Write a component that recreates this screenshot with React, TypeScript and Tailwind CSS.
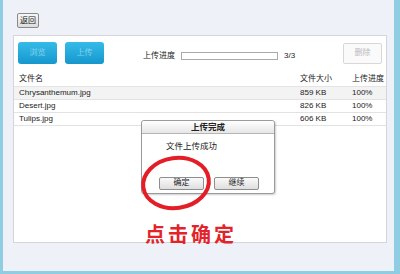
import React from 'react';

const files = [
  { name: 'Chrysanthemum.jpg', size: '859 KB', progress: '100%' },
  { name: 'Desert.jpg', size: '826 KB', progress: '100%' },
  { name: 'Tulips.jpg', size: '606 KB', progress: '100%' },
];

const font = { fontFamily: '"Liberation Sans", "Noto Sans CJK SC", sans-serif' };

export default function App() {
  return (
    <div className="w-[400px] h-[274px] bg-[#8ecde2] overflow-hidden text-[#222]" style={font}>
      <div className="relative ml-[3px] w-[391px] h-[271px] bg-[#eef2f8]">
        {/* back button */}
        <div className="pt-[13px] pl-[14px]">
          <button className="w-[22px] h-[15px] text-[8px] leading-none border border-[#8a8a8a] rounded-[2px] bg-gradient-to-b from-[#f7f7f7] to-[#dcdcdc] flex items-center justify-center">
            返回
          </button>
        </div>

        {/* main panel */}
        <div className="mt-[7px] ml-[10px] w-[374px] h-[208px] bg-white border border-[#d4d6da]">
          {/* toolbar */}
          <div className="flex items-center h-[26px] mt-[4px] pl-[4px] pr-[4px] text-[8px] leading-none">
            <button className="w-[39px] h-[22px] rounded-[3px] bg-gradient-to-b from-[#34bbe8] to-[#1597cd] text-[#84d2ef]">
              浏览
            </button>
            <button className="ml-[8px] w-[39px] h-[22px] rounded-[3px] bg-gradient-to-b from-[#34bbe8] to-[#1597cd] text-[#84d2ef]">
              上传
            </button>
            <span className="ml-[39px] mt-[6px] whitespace-nowrap">上传进度</span>
            <div className="ml-[6px] mt-[6px] w-[97px] h-[8px] border border-[#aaa] bg-white"></div>
            <span className="ml-[6px] mt-[6px]">3/3</span>
            <button className="ml-auto w-[39px] h-[21px] border border-[#d8d8d8] rounded-[2px] bg-[#fafafa] text-[#bbb]">
              删除
            </button>
          </div>

          {/* table */}
          <div className="mt-[6px] text-[8px] leading-none">
            <div className="flex h-[15px] items-center border-b border-[#e4e4e4] whitespace-nowrap">
              <span className="pl-[5px] flex-1">文件名</span>
              <span className="w-[52px]">文件大小</span>
              <span className="w-[34px]">上传进度</span>
            </div>
            {files.map((f, i) => (
              <div
                key={f.name}
                className={`flex h-[13px] items-center border-b border-[#e2e2e2] ${i === 0 ? 'bg-[#f3f3f3]' : 'bg-white'}`}
              >
                <span className="pl-[5px] flex-1">{f.name}</span>
                <span className="w-[52px]">{f.size}</span>
                <span className="w-[34px]">{f.progress}</span>
              </div>
            ))}
          </div>
        </div>

        {/* dialog */}
        <div className="absolute left-[138px] top-[120px] w-[134px] h-[74px] bg-white border border-[#9a9a9a] rounded-[3px] shadow-[1px_1px_2px_rgba(0,0,0,0.2)]">
          <div className="h-[13px] border-b border-[#b5b5b5] bg-gradient-to-b from-[#ffffff] to-[#e6e6e6] rounded-t-[3px] flex items-center justify-center text-[8.5px] font-bold leading-none">
            上传完成
          </div>
          <div className="pl-[24px] pt-[8px] text-[8.5px] leading-none">文件上传成功</div>
          <div className="flex gap-[10px] pl-[17px] mt-[26px]">
            <button className="w-[45px] h-[13px] border border-[#8e8e8e] rounded-[2px] bg-gradient-to-b from-[#fafafa] to-[#dedede] text-[8px] leading-none">
              确定
            </button>
            <button className="w-[45px] h-[13px] border border-[#8e8e8e] rounded-[2px] bg-gradient-to-b from-[#fafafa] to-[#dedede] text-[8px] leading-none">
              继续
            </button>
          </div>
        </div>

        {/* red annotation */}
        <svg className="absolute left-[136px] top-[154px]" width="80" height="58" viewBox="0 0 80 58">
          <ellipse cx="37" cy="29" rx="33" ry="25" fill="none" stroke="#e41e26" strokeWidth="4" transform="rotate(-8 37 29)" />
        </svg>
        <div className="absolute left-[142px] top-[225px] text-[20px] font-bold text-[#e3232a] leading-none tracking-[3px]">
          点击确定
        </div>
      </div>
    </div>
  );
}
